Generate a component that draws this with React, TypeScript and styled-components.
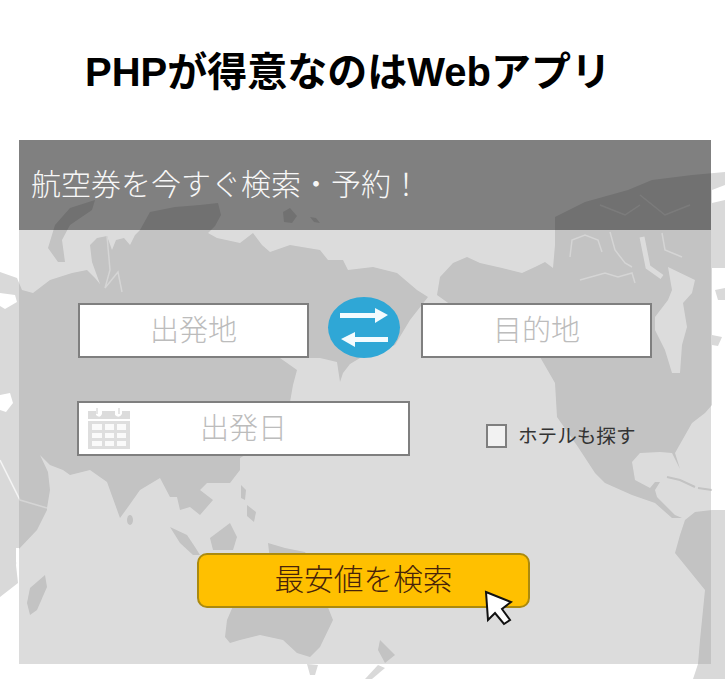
import React from 'react';
import styled, { createGlobalStyle } from 'styled-components';

const FONT = '"Liberation Sans", "Noto Sans CJK JP", sans-serif';
const BORDER = '#7f7f7f';
const LAND = '#d9d9d9';

const GlobalStyle = createGlobalStyle`
    html, body {
        margin: 0;
        padding: 0;
        background: #fff;
    }
`;

const Page = styled.div`
    position: relative;
    width: 725px;
    height: 679px;
    overflow: hidden;
    font-family: ${FONT};
`;

const MapLayer = styled.svg`
    position: absolute;
    top: 0;
    left: 0;
    filter: blur(0.6px);
`;

const Title = styled.h1`
    position: relative;
    margin: 0;
    height: 140px;
    box-sizing: border-box;
    padding: 52px 0 0 85px;
    font-size: 40px;
    line-height: 40px;
    font-weight: 700;
    color: #000;
    white-space: nowrap;
`;

const Panel = styled.section`
    position: relative;
    margin-left: 19px;
    width: 692px;
    height: 524px;
    background: rgba(153, 153, 153, 0.34);
`;

const PanelHeader = styled.header`
    display: flex;
    align-items: center;
    height: 90px;
    box-sizing: border-box;
    padding: 0 0 6px 12px;
    background: rgba(0, 0, 0, 0.42);
    color: #f7f7f7;
    font-size: 30px;
    font-weight: 300;
    white-space: nowrap;
`;

const Form = styled.div`
    display: flex;
    flex-direction: column;
`;

const RouteRow = styled.div`
    display: flex;
    align-items: flex-end;
    margin: 67px 0 0 59px;
`;

const DateRow = styled.div`
    display: flex;
    margin: 43px 0 0 58px;
`;

const Field = styled.div<{ $width: number }>`
    position: relative;
    display: flex;
    align-items: center;
    justify-content: center;
    width: ${props => props.$width}px;
    height: 55px;
    box-sizing: border-box;
    padding-bottom: 5px;
    border: 2px solid ${BORDER};
    background: #fff;
    color: #bcbcbc;
    font-size: 29px;
    font-weight: 300;
`;

const SwapButton = styled.div`
    display: flex;
    margin: 0 21px 0 19px;
    width: 72px;
    height: 61px;
    border-radius: 50%;
    background: #2fa7d6;
`;

const CalendarIcon = styled.svg`
    position: absolute;
    left: 8px;
    top: 5px;
`;

const HotelOption = styled.label`
    display: flex;
    align-items: center;
    gap: 11px;
    height: 24px;
    margin: 23px 0 0 76px;
    color: #333;
    font-size: 19.6px;
    white-space: nowrap;
`;

const HotelLabel = styled.span`
    padding-bottom: 4px;
`;

const CheckBox = styled.span`
    width: 21px;
    height: 24px;
    box-sizing: border-box;
    border: 2px solid ${BORDER};
    background: #f2f2f2;
`;

const SearchButton = styled.div`
    position: relative;
    display: flex;
    align-items: center;
    justify-content: center;
    width: 333px;
    height: 55px;
    box-sizing: border-box;
    margin: 97px 0 0 178px;
    padding: 0 0 6px 0;
    border: 2px solid #ab8a0e;
    border-radius: 10px;
    background: #ffc000;
    color: #47230a;
    font-size: 29.7px;
    font-weight: 300;
    white-space: nowrap;
`;

const Pointer = styled.svg`
    position: absolute;
    left: 284px;
    top: 34px;
`;

// land masses, in page pixels (pacific centred map)
const LAND_SHAPES = [
    // eurasia and africa
    'M0,272 L17,278 22,290 33,293 50,280 72,273 87,270 95,278 100,284 92,262 90,245 97,238 107,236 112,250 116,240 124,238 130,245 135,235 140,230 150,212 175,207 200,205 218,203 221,215 215,226 208,233 217,238 240,243 253,233 262,245 270,252 290,245 320,250 328,260 343,260 348,270 373,267 397,273 417,290 428,297 410,320 395,345 360,358 350,364 343,373 340,382 337,362 320,358 280,358 297,370 293,385 290,402 270,440 240,458 240,470 230,483 207,483 200,490 213,500 200,515 190,507 180,510 177,497 170,497 160,478 140,490 128,507 120,518 107,482 90,470 70,475 63,470 50,465 40,455 48,472 50,490 47,508 47,510 37,530 18,550 16,565 18,583 0,597 Z',
    // north america
    'M440,277 L453,263 467,257 480,263 502,268 522,273 535,267 545,262 553,268 555,245 555,217 585,202 628,190 652,180 692,175 725,172 725,185 712,190 712,405 705,413 692,423 675,453 680,469 672,453 660,452 640,453 632,462 635,480 650,488 655,482 660,482 655,490 657,497 675,515 682,518 672,518 655,503 632,495 605,483 595,473 578,447 557,417 556,400 555,383 540,357 500,340 437,295 Z',
    // south america
    'M685,520 L695,512 712,510 725,510 725,679 693,679 698,664 700,640 705,590 675,553 680,535 Z',
    // arctic arc and islands
    'M95,200 L92,210 70,225 62,240 65,262 58,262 48,248 55,225 70,208 Z',
    'M283,212 L290,208 297,216 292,223 284,222 Z',
    'M310,217 L316,218 320,223 314,222 Z',
    'M712,203 L725,200 725,268 712,268 Z',
    'M715,290 L725,288 725,300 718,300 Z',
    'M712,335 L722,337 718,346 712,345 Z',
    // madagascar, sumatra, borneo, new guinea
    'M45,575 L47,587 37,610 30,615 27,603 30,588 Z',
    'M170,527 L187,535 195,547 200,555 193,555 180,543 Z',
    'M230,523 L237,537 233,550 213,550 210,538 Z',
    'M268,543 L285,548 305,552 310,560 270,560 Z',
    // philippines
    'M241,485 L246,490 245,500 241,498 Z',
    'M247,505 L256,512 254,522 247,516 Z',
    // australia, tasmania, new zealand
    'M240,590 L300,590 325,600 333,620 320,647 310,657 297,653 283,640 260,635 240,640 230,643 225,637 227,620 Z',
    'M307,664 L318,665 315,675 310,675 Z',
    'M380,640 L395,655 385,663 378,650 Z',
    'M385,668 L372,679 365,679 378,665 Z',
];

const OCEAN_SHAPES = [
    'M0,293 L15,295 17,302 5,309 0,306 Z',
    'M0,395 L10,393 13,403 6,412 0,410 Z',
    'M16,548 L19,548 19,565 16,562 Z',
    // hudson bay
    'M668,267 L695,280 692,293 683,303 687,327 682,345 680,373 672,373 665,350 655,330 655,317 668,300 672,290 Z',
];

const CHANNELS = [
    'M0,460 L20,500 47,508',
    'M107,236 L110,270 105,288 118,272 122,292',
    'M570,257 L572,240 585,235 598,240 602,252',
    'M580,280 L605,273 618,277 632,273 635,283',
    'M610,232 L615,250 625,263 632,267',
    'M662,233 L665,250 682,257',
    'M600,205 L625,215 640,205',
    'M640,195 L665,215 690,205',
];

const WorldMap = () => (
    <MapLayer width={725} height={679} viewBox="0 0 725 679">
        {LAND_SHAPES.map(d => (
            <path key={d} d={d} fill={LAND} />
        ))}
        {OCEAN_SHAPES.map(d => (
            <path key={d} d={d} fill="#fff" />
        ))}
        {CHANNELS.map(d => (
            <path key={d} d={d} fill="none" stroke="#f4f4f4" strokeWidth={1.5} />
        ))}
        <path d="M642,237 L648,267 662,277" fill="none" stroke="#fff" strokeWidth={5} />
        <ellipse cx={130} cy={520} rx={3} ry={5} fill={LAND} />
        <path d="M667,477 L680,480 695,487 M698,488 L712,490" fill="none" stroke={LAND} strokeWidth={2} />
    </MapLayer>
);

const SwapArrows = () => (
    <svg width={72} height={61} viewBox="0 0 72 61">
        <path
            d="M12,16 H47 V11 L60,18 47,26 V21 H12 Z M60,40 H27 V35 L13,42 27,50 V45 H60 Z"
            fill="#f4fbfe"
        />
    </svg>
);

const Calendar = () => (
    <CalendarIcon width={44} height={42} viewBox="0 0 44 42">
        <path d="M1,3 H9 V7 Q13,11 15,6 V3 H28 V7 Q32,11 35,6 V3 H43 V11 H1 Z" fill="#dcdcdc" />
        <path d="M10,0 V6 M32,0 V6" stroke="#e6e6e6" strokeWidth={2} fill="none" />
        <path d="M1,13 H43 V41 H1 Z" fill="#dedede" />
        <path
            d="M5,16 H15 V22 H5 Z M18,16 H27 V22 H18 Z M30,16 H39 V22 H30 Z M5,25 H15 V30 H5 Z M18,25 H27 V30 H18 Z M30,25 H39 V30 H30 Z M5,33 H15 V38 H5 Z M18,33 H27 V38 H18 Z M30,33 H39 V38 H30 Z"
            fill="#fafafa"
        />
    </CalendarIcon>
);

const Cursor = () => (
    <Pointer width={30} height={38} viewBox="0 0 30 38">
        <path
            d="M3,3 L28,13 19,20 27,31 21,35 12,24 5,31 Z"
            fill="#fff"
            stroke="#111"
            strokeWidth={2}
            strokeLinejoin="miter"
        />
    </Pointer>
);

const App = () => (
    <Page>
        <GlobalStyle />
        <WorldMap />
        <Title>PHPが得意なのはWebアプリ</Title>
        <Panel>
            <PanelHeader>航空券を今すぐ検索・予約！</PanelHeader>
            <Form>
                <RouteRow>
                    <Field $width={231}>出発地</Field>
                    <SwapButton>
                        <SwapArrows />
                    </SwapButton>
                    <Field $width={231}>目的地</Field>
                </RouteRow>
                <DateRow>
                    <Field $width={333}>
                        <Calendar />
                        出発日
                    </Field>
                    <HotelOption>
                        <CheckBox />
                        <HotelLabel>ホテルも探す</HotelLabel>
                    </HotelOption>
                </DateRow>
                <SearchButton>
                    最安値を検索
                    <Cursor />
                </SearchButton>
            </Form>
        </Panel>
    </Page>
);

export default App;
